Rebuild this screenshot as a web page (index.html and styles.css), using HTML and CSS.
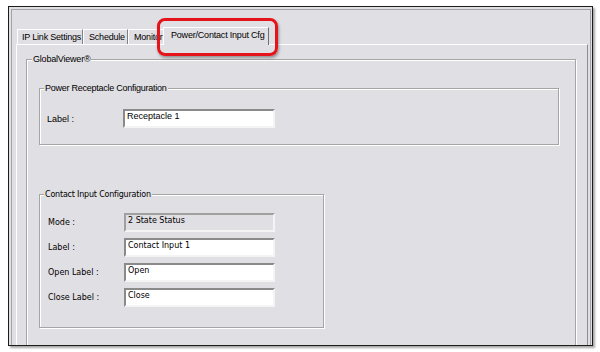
FILE: index.html
```html
<!DOCTYPE html>
<html>
<head>
<meta charset="utf-8">
<link rel="stylesheet" href="styles.css">
</head>
<body>
<div class="frame">
  <div class="window">
    <div class="tabs">
      <div class="tab t1">IP Link Settings</div>
      <div class="tab t2">Schedule</div>
      <div class="tab t3">Monitor</div>
      <div class="tab active">Power/Contact Input Cfg</div>
    </div>
    <div class="page">
      <fieldset class="group gv">
        <legend>GlobalViewer®</legend>
        <div class="gv-body">
          <fieldset class="group power">
            <legend>Power Receptacle Configuration</legend>
            <div class="power-body">
              <div class="row"><span class="lbl">Label :</span><div class="field">Receptacle 1</div></div>
            </div>
          </fieldset>
          <fieldset class="group contact">
            <legend>Contact Input Configuration</legend>
            <div class="contact-body">
              <div class="row"><span class="lbl">Mode :</span><div class="field disabled">2 State Status</div></div>
              <div class="row"><span class="lbl">Label :</span><div class="field">Contact Input 1</div></div>
              <div class="row"><span class="lbl">Open Label :</span><div class="field">Open</div></div>
              <div class="row"><span class="lbl">Close Label :</span><div class="field">Close</div></div>
            </div>
          </fieldset>
        </div>
      </fieldset>
    </div>
  </div>
</div>
<div class="highlight"></div>
</body>
</html>
```
FILE: styles.css
```css
html, body {
  margin: 0;
  padding: 0;
}
body {
  position: relative;
  width: 600px;
  height: 352px;
  overflow: hidden;
  background: #fff;
  font-family: "Liberation Sans", Arial, sans-serif;
  font-size: 9px;
  color: #000;
}
.frame {
  margin: 6px 0 0 8px;
  width: 585px;
  height: 340px;
  box-sizing: border-box;
  border: 1px solid #1c1c1c;
  background: #e0dfe3;
  padding: 2px 1px 0 2px;
  box-shadow: 2px 2px 2px rgba(0, 0, 0, 0.35);
  overflow: hidden;
}
.window {
  height: 400px;
  box-sizing: border-box;
  border: 1px solid #a3a3a3;
  border-bottom: 0;
  padding: 17px 2px 0 4px;
}
.tabs {
  display: flex;
  align-items: flex-end;
  height: 17px;
  padding-left: 1px;
  letter-spacing: -0.2px;
}
.tab {
  height: 15px;
  box-sizing: border-box;
  border: 1px solid #fff;
  border-right-color: #808080;
  border-bottom: 0;
  line-height: 14px;
  white-space: nowrap;
  overflow: hidden;
  padding-left: 4px;
}
.t1 { width: 66px; }
.t2 { width: 45px; padding-left: 5px; }
.t3 { width: 37px; padding-left: 5px; border-right: 0; }
.tab.active {
  position: relative;
  z-index: 1;
  width: 106px;
  height: 18px;
  margin-left: -2px;
  margin-bottom: -1px;
  background: #e0dfe3;
  line-height: 15px;
  padding-left: 7px;
  border-right-color: #6f6f6f;
}
.page {
  height: 320px;
  border-top: 1px solid #fff;
  border-left: 1px solid #fff;
  border-right: 1px solid #8d8d8d;
  padding: 9px 11px 0 9px;
}
.group {
  margin: 0;
  padding: 0;
  min-width: 0;
  border: 1px solid #a5a5a5;
  box-shadow: 1px 1px 0 #fff, inset 1px 1px 0 #fff;
}
.group legend {
  padding: 0 1px;
  line-height: 11px;
  background: #e0dfe3;
}
.gv {
  height: 400px;
}
.gv legend {
  margin-left: 5px;
  letter-spacing: -0.2px;
}
.gv-body {
  padding: 18px 16px 0 12px;
}
.power legend {
  margin-left: 4px;
  letter-spacing: -0.25px;
}
.power-body {
  padding: 15px 0 16px 7px;
}
.row {
  display: flex;
  align-items: center;
}
.lbl {
  width: 76px;
}
.field {
  width: 152px;
  height: 19px;
  box-sizing: border-box;
  border: 2px solid;
  border-color: #8a8a8a #f4f4f4 #f4f4f4 #8a8a8a;
  background: #fff;
  padding: 0 2px;
  line-height: 11px;
  white-space: nowrap;
}
.field.disabled {
  background: #e0dfe3;
  border-color: #a0a0a0 #f4f4f4 #f4f4f4 #a0a0a0;
}
.contact {
  width: 285px;
  box-sizing: border-box;
  margin-top: 44px;
  font-family: "DejaVu Sans", Verdana, sans-serif;
  font-size: 8px;
}
.contact legend {
  margin-left: 4px;
}
.contact-body {
  display: flex;
  flex-direction: column;
  gap: 6px;
  padding: 13px 0 20px 8px;
}
.contact .field {
  width: 151px;
}
.highlight {
  position: absolute;
  left: 157px;
  top: 18px;
  width: 121px;
  height: 38px;
  box-sizing: border-box;
  border: 3px solid #e5141b;
  border-radius: 8px;
  box-shadow: 1px 2px 3px rgba(0, 0, 0, 0.35);
}
```
